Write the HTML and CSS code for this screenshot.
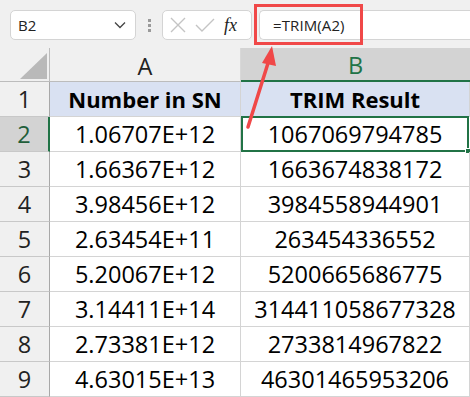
FILE: index.html
```html
<!DOCTYPE html>
<html>
<head>
<meta charset="utf-8">
<link rel="stylesheet" href="styles.css">
</head>
<body>
<div class="app">
  <div class="toolbar">
    <div class="namebox">
      <span class="namebox-text">B2</span>
      <svg class="chev" width="12" height="8" viewBox="0 0 12 8"><path d="M1 1.5 L6 6.5 L11 1.5" fill="none" stroke="#444" stroke-width="1.3"/></svg>
    </div>
    <div class="grip"><span></span><span></span><span></span></div>
    <div class="fxbox">
      <svg class="xicon" width="16" height="16" viewBox="0 0 16 16"><path d="M1 1 L15 15 M15 1 L1 15" stroke="#c4c4c4" stroke-width="1.4" fill="none"/></svg>
      <svg class="check" width="20" height="16" viewBox="0 0 20 16"><path d="M1 8 L7 14 L19 2" stroke="#c4c4c4" stroke-width="1.4" fill="none"/></svg>
      <span class="fx">fx</span>
    </div>
    <div class="formula"><span class="formula-text">=TRIM(A2)</span></div>
  </div>
  <div class="grid">
    <div class="corner"><div class="tri"></div></div>
    <div class="colhead">A</div>
    <div class="colhead sel">B</div>

    <div class="rowhead">1</div>
    <div class="cell hdr">Number in SN</div>
    <div class="cell hdr">TRIM Result</div>

    <div class="rowhead sel">2</div>
    <div class="cell">1.06707E+12</div>
    <div class="cell active">1067069794785<span class="handle"></span></div>

    <div class="rowhead">3</div>
    <div class="cell">1.66367E+12</div>
    <div class="cell">1663674838172</div>

    <div class="rowhead">4</div>
    <div class="cell">3.98456E+12</div>
    <div class="cell">3984558944901</div>

    <div class="rowhead">5</div>
    <div class="cell">2.63454E+11</div>
    <div class="cell">263454336552</div>

    <div class="rowhead">6</div>
    <div class="cell">5.20067E+12</div>
    <div class="cell">5200665686775</div>

    <div class="rowhead">7</div>
    <div class="cell">3.14411E+14</div>
    <div class="cell">314411058677328</div>

    <div class="rowhead">8</div>
    <div class="cell">2.73381E+12</div>
    <div class="cell">2733814967822</div>

    <div class="rowhead">9</div>
    <div class="cell">4.63015E+13</div>
    <div class="cell">46301465953206</div>
  </div>
  <div class="highlight"></div>
  <svg class="arrow" width="470" height="397" viewBox="0 0 470 397">
    <path d="M248 127 L269 60" stroke="#f04848" stroke-width="3.5" stroke-linecap="round" fill="none"/>
    <path d="M272 46 L262 63 L276 66 Z" fill="#f04848"/>
  </svg>
</div>
</body>
</html>
```
FILE: styles.css
```css
* { box-sizing: border-box; }
html, body { margin: 0; padding: 0; }
body { width: 470px; height: 397px; overflow: hidden; background: #fff; }
.app { position: relative; width: 470px; height: 397px; }

.toolbar {
  height: 48px;
  background: #f0f0f0;
  display: flex;
  align-items: flex-start;
  padding-top: 10px;
  font-family: "Open Sans", "Noto Sans", sans-serif;
}
.namebox {
  margin-left: 10px;
  width: 126px;
  height: 30px;
  background: #fff;
  border: 1px solid #d4d4d4;
  border-radius: 5px;
  display: flex;
  align-items: center;
  justify-content: space-between;
  padding: 0 9px 0 7px;
}
.namebox-text { font-size: 15px; color: #222; }
.grip {
  width: 26px;
  height: 30px;
  display: flex;
  flex-direction: column;
  align-items: center;
  justify-content: center;
  gap: 2px;
}
.grip span { width: 3px; height: 3px; background: #9a9a9a; display: block; }
.fxbox {
  width: 90px;
  height: 30px;
  background: #fff;
  border: 1px solid #d4d4d4;
  border-radius: 5px;
  display: flex;
  align-items: center;
  padding-left: 7px;
  gap: 11px;
}
.check { margin-left: -2px; }
.fx {
  font-family: "Liberation Serif", serif;
  font-style: italic;
  font-size: 18px;
  color: #222;
  margin-left: -2px;
}
.formula {
  margin-left: 7px;
  flex: 1;
  height: 30px;
  background: #fff;
  border: 1px solid #d4d4d4;
  border-right: none;
  border-radius: 5px 0 0 5px;
  display: flex;
  align-items: center;
  padding-left: 13px;
}
.formula-text { font-size: 15px; color: #222; letter-spacing: 0.1px; }

.grid {
  display: grid;
  grid-template-columns: 50px 191px 229px;
  grid-template-rows: 34px repeat(9, 35px);
  font-family: "Open Sans", "Noto Sans", sans-serif;
  font-size: 23.5px;
  color: #000;
}
.corner {
  background: #f0f0f0;
  border-right: 1px solid #bcbcbc;
  border-bottom: 1px solid #bcbcbc;
  position: relative;
}
.tri {
  position: absolute;
  left: 20px;
  top: 5px;
  width: 27px;
  height: 26px;
  background: #b9b9b9;
  clip-path: polygon(100% 0, 100% 100%, 0 100%);
}
.colhead {
  background: #f0f0f0;
  border-right: 1px solid #d8d8d8;
  border-bottom: 1px solid #bcbcbc;
  display: flex;
  align-items: center;
  justify-content: center;
  color: #222;
  padding-top: 2px;
}
.colhead.sel {
  background: #d3d3d3;
  color: #217346;
  border-bottom: 2px solid #217346;
  border-right: none;
}
.rowhead {
  background: #f0f0f0;
  border-right: 1px solid #a8a8a8;
  border-bottom: 1px solid #c8c8c8;
  display: flex;
  align-items: center;
  justify-content: center;
  color: #222;
}
.rowhead.sel {
  background: #d3d3d3;
  color: #1f5e3a;
  border-right: 2px solid #217346;
}
.cell {
  border-right: 1px solid #d4d4d4;
  border-bottom: 1px solid #d4d4d4;
  display: flex;
  align-items: center;
  justify-content: center;
  position: relative;
}
.cell.hdr {
  background: #d9e1f2;
  font-weight: 700;
  font-size: 22px;
}
.cell.active {
  border: 2px solid #217346;
  margin: -1px 1px 0 0;
}
.handle {
  position: absolute;
  right: -4px;
  bottom: -4px;
  width: 6px;
  height: 6px;
  background: #217346;
  border: 1px solid #fff;
}
.highlight {
  position: absolute;
  left: 254px;
  top: 4px;
  width: 109px;
  height: 41px;
  border: 3px solid #f04848;
}
.arrow {
  position: absolute;
  left: 0;
  top: 0;
  pointer-events: none;
}
```
